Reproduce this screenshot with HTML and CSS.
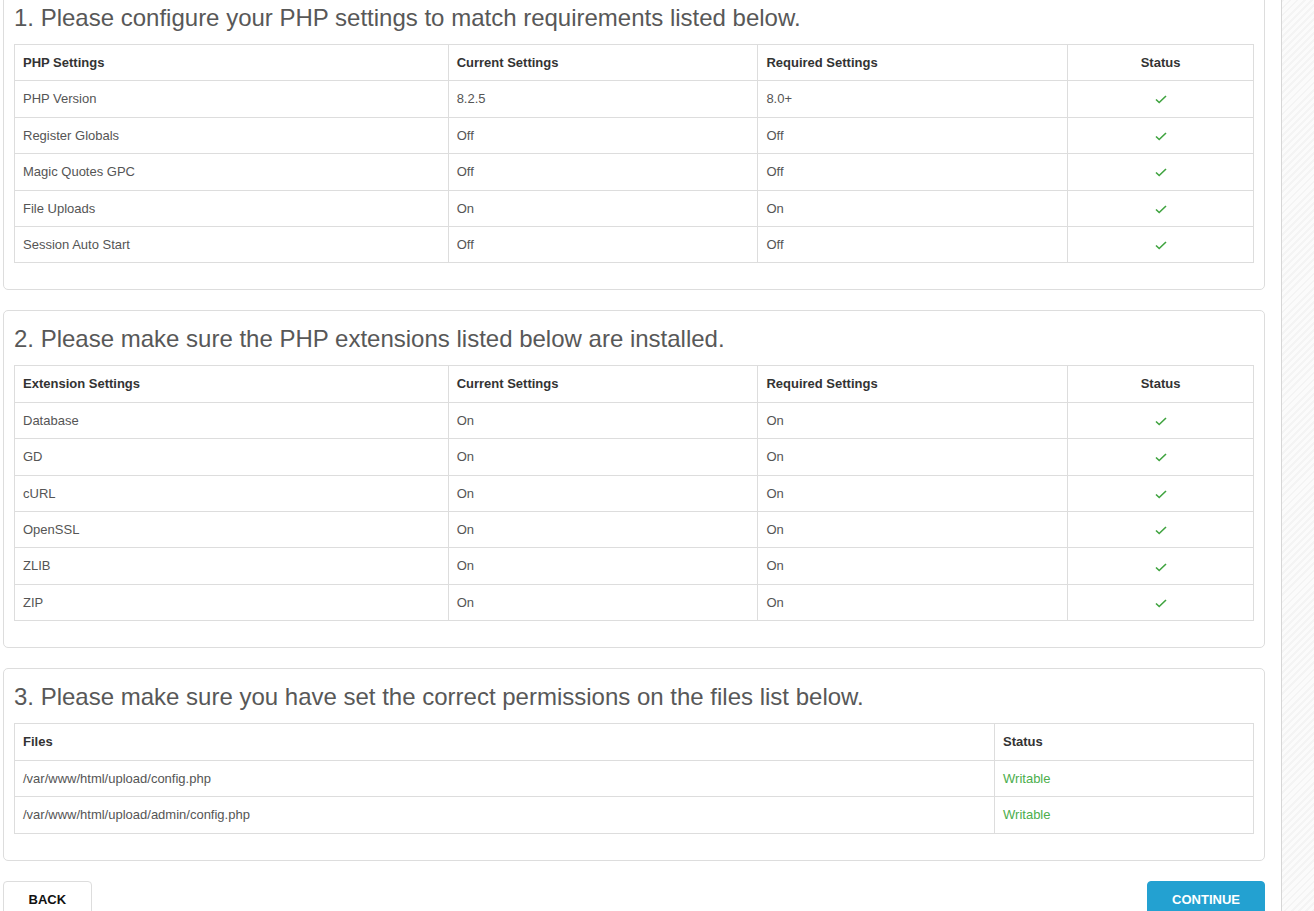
FILE: index.html
```html
<!DOCTYPE html>
<html>
<head>
<meta charset="utf-8">
<title>Installation</title>
<link rel="stylesheet" href="styles.css">
</head>
<body>
<div class="page">
  <div class="scroll-offset">
    <section class="panel">
      <h2 class="panel-title">1. Please configure your PHP settings to match requirements listed below.</h2>
      <table class="req-table">
        <colgroup><col class="c1"><col class="c2"><col class="c3"><col class="c4"></colgroup>
        <thead>
          <tr><th>PHP Settings</th><th>Current Settings</th><th>Required Settings</th><th class="center">Status</th></tr>
        </thead>
        <tbody>
          <tr><td>PHP Version</td><td>8.2.5</td><td>8.0+</td><td class="center"><svg class="check" viewBox="0 0 12 9"><polyline points="1,4.5 4.2,7.5 11,1"/></svg></td></tr>
          <tr><td>Register Globals</td><td>Off</td><td>Off</td><td class="center"><svg class="check" viewBox="0 0 12 9"><polyline points="1,4.5 4.2,7.5 11,1"/></svg></td></tr>
          <tr><td>Magic Quotes GPC</td><td>Off</td><td>Off</td><td class="center"><svg class="check" viewBox="0 0 12 9"><polyline points="1,4.5 4.2,7.5 11,1"/></svg></td></tr>
          <tr><td>File Uploads</td><td>On</td><td>On</td><td class="center"><svg class="check" viewBox="0 0 12 9"><polyline points="1,4.5 4.2,7.5 11,1"/></svg></td></tr>
          <tr><td>Session Auto Start</td><td>Off</td><td>Off</td><td class="center"><svg class="check" viewBox="0 0 12 9"><polyline points="1,4.5 4.2,7.5 11,1"/></svg></td></tr>
        </tbody>
      </table>
    </section>

    <section class="panel">
      <h2 class="panel-title">2. Please make sure the PHP extensions listed below are installed.</h2>
      <table class="req-table">
        <colgroup><col class="c1"><col class="c2"><col class="c3"><col class="c4"></colgroup>
        <thead>
          <tr><th>Extension Settings</th><th>Current Settings</th><th>Required Settings</th><th class="center">Status</th></tr>
        </thead>
        <tbody>
          <tr><td>Database</td><td>On</td><td>On</td><td class="center"><svg class="check" viewBox="0 0 12 9"><polyline points="1,4.5 4.2,7.5 11,1"/></svg></td></tr>
          <tr><td>GD</td><td>On</td><td>On</td><td class="center"><svg class="check" viewBox="0 0 12 9"><polyline points="1,4.5 4.2,7.5 11,1"/></svg></td></tr>
          <tr><td>cURL</td><td>On</td><td>On</td><td class="center"><svg class="check" viewBox="0 0 12 9"><polyline points="1,4.5 4.2,7.5 11,1"/></svg></td></tr>
          <tr><td>OpenSSL</td><td>On</td><td>On</td><td class="center"><svg class="check" viewBox="0 0 12 9"><polyline points="1,4.5 4.2,7.5 11,1"/></svg></td></tr>
          <tr><td>ZLIB</td><td>On</td><td>On</td><td class="center"><svg class="check" viewBox="0 0 12 9"><polyline points="1,4.5 4.2,7.5 11,1"/></svg></td></tr>
          <tr><td>ZIP</td><td>On</td><td>On</td><td class="center"><svg class="check" viewBox="0 0 12 9"><polyline points="1,4.5 4.2,7.5 11,1"/></svg></td></tr>
        </tbody>
      </table>
    </section>

    <section class="panel">
      <h2 class="panel-title">3. Please make sure you have set the correct permissions on the files list below.</h2>
      <table class="req-table">
        <colgroup><col class="f1"><col class="f2"></colgroup>
        <thead>
          <tr><th>Files</th><th>Status</th></tr>
        </thead>
        <tbody>
          <tr><td>/var/www/html/upload/config.php</td><td class="ok">Writable</td></tr>
          <tr><td>/var/www/html/upload/admin/config.php</td><td class="ok">Writable</td></tr>
        </tbody>
      </table>
    </section>

    <div class="actions">
      <a class="btn btn-default" href="#">BACK</a>
      <a class="btn btn-primary" href="#">CONTINUE</a>
    </div>
  </div>
</div>
<div class="side"></div>
</body>
</html>
```

FILE: styles.css
```css
html, body {
  margin: 0;
  padding: 0;
  height: 100%;
  overflow: hidden;
}
body {
  display: flex;
  font-family: "Liberation Sans", Arial, sans-serif;
  font-size: 13px;
  color: #555;
  background: #fff;
}
.page {
  width: 1262px;
  padding: 0 16px 0 3px;
  border-right: 1px solid #d6d6d6;
  background: #fff;
  flex: none;
}
.scroll-offset {
  margin-top: -11px;
}
.side {
  flex: 1;
  background: repeating-linear-gradient(135deg, #f4f4f4 0 2px, #fbfbfb 2px 5px);
}
.panel {
  border: 1px solid #ddd;
  border-radius: 5px;
  padding: 15px 10px 10px;
  margin-bottom: 20px;
  background: #fff;
}
.panel-title {
  margin: 0 0 13px;
  font-size: 24px;
  line-height: 26px;
  font-weight: normal;
  color: #585858;
}
.req-table {
  width: 100%;
  border-collapse: collapse;
  margin-bottom: 16px;
  table-layout: fixed;
}
.req-table th,
.req-table td {
  border: 1px solid #ddd;
  padding: 8px;
  line-height: 19.4px;
  text-align: left;
  vertical-align: middle;
}
.req-table th {
  color: #333;
  font-weight: bold;
}
.req-table td {
  color: #555;
}
.req-table .center {
  text-align: center;
}
.c1 { width: 35%; }
.c2 { width: 25%; }
.c3 { width: 25%; }
.c4 { width: 15%; }
.f1 { width: 79.1%; }
.f2 { width: 20.9%; }
.check {
  width: 12px;
  height: 9px;
  display: inline-block;
  vertical-align: middle;
  fill: none;
  stroke: #3fa33f;
  stroke-width: 1.6;
}
.req-table td.ok {
  color: #4cae4c;
}
.actions {
  display: flex;
  justify-content: space-between;
}
.btn {
  display: inline-block;
  font-weight: bold;
  font-size: 13px;
  line-height: 20px;
  padding: 8px 23px;
  border-radius: 4px;
  text-decoration: none;
  border: 1px solid #ddd;
}
.btn-default {
  color: #111;
  background: #fff;
  padding: 8px 24.5px;
}
.btn-primary {
  color: #fff;
  background: #23a1d1;
  border-color: #23a1d1;
  padding: 8px 24px;
}
```
